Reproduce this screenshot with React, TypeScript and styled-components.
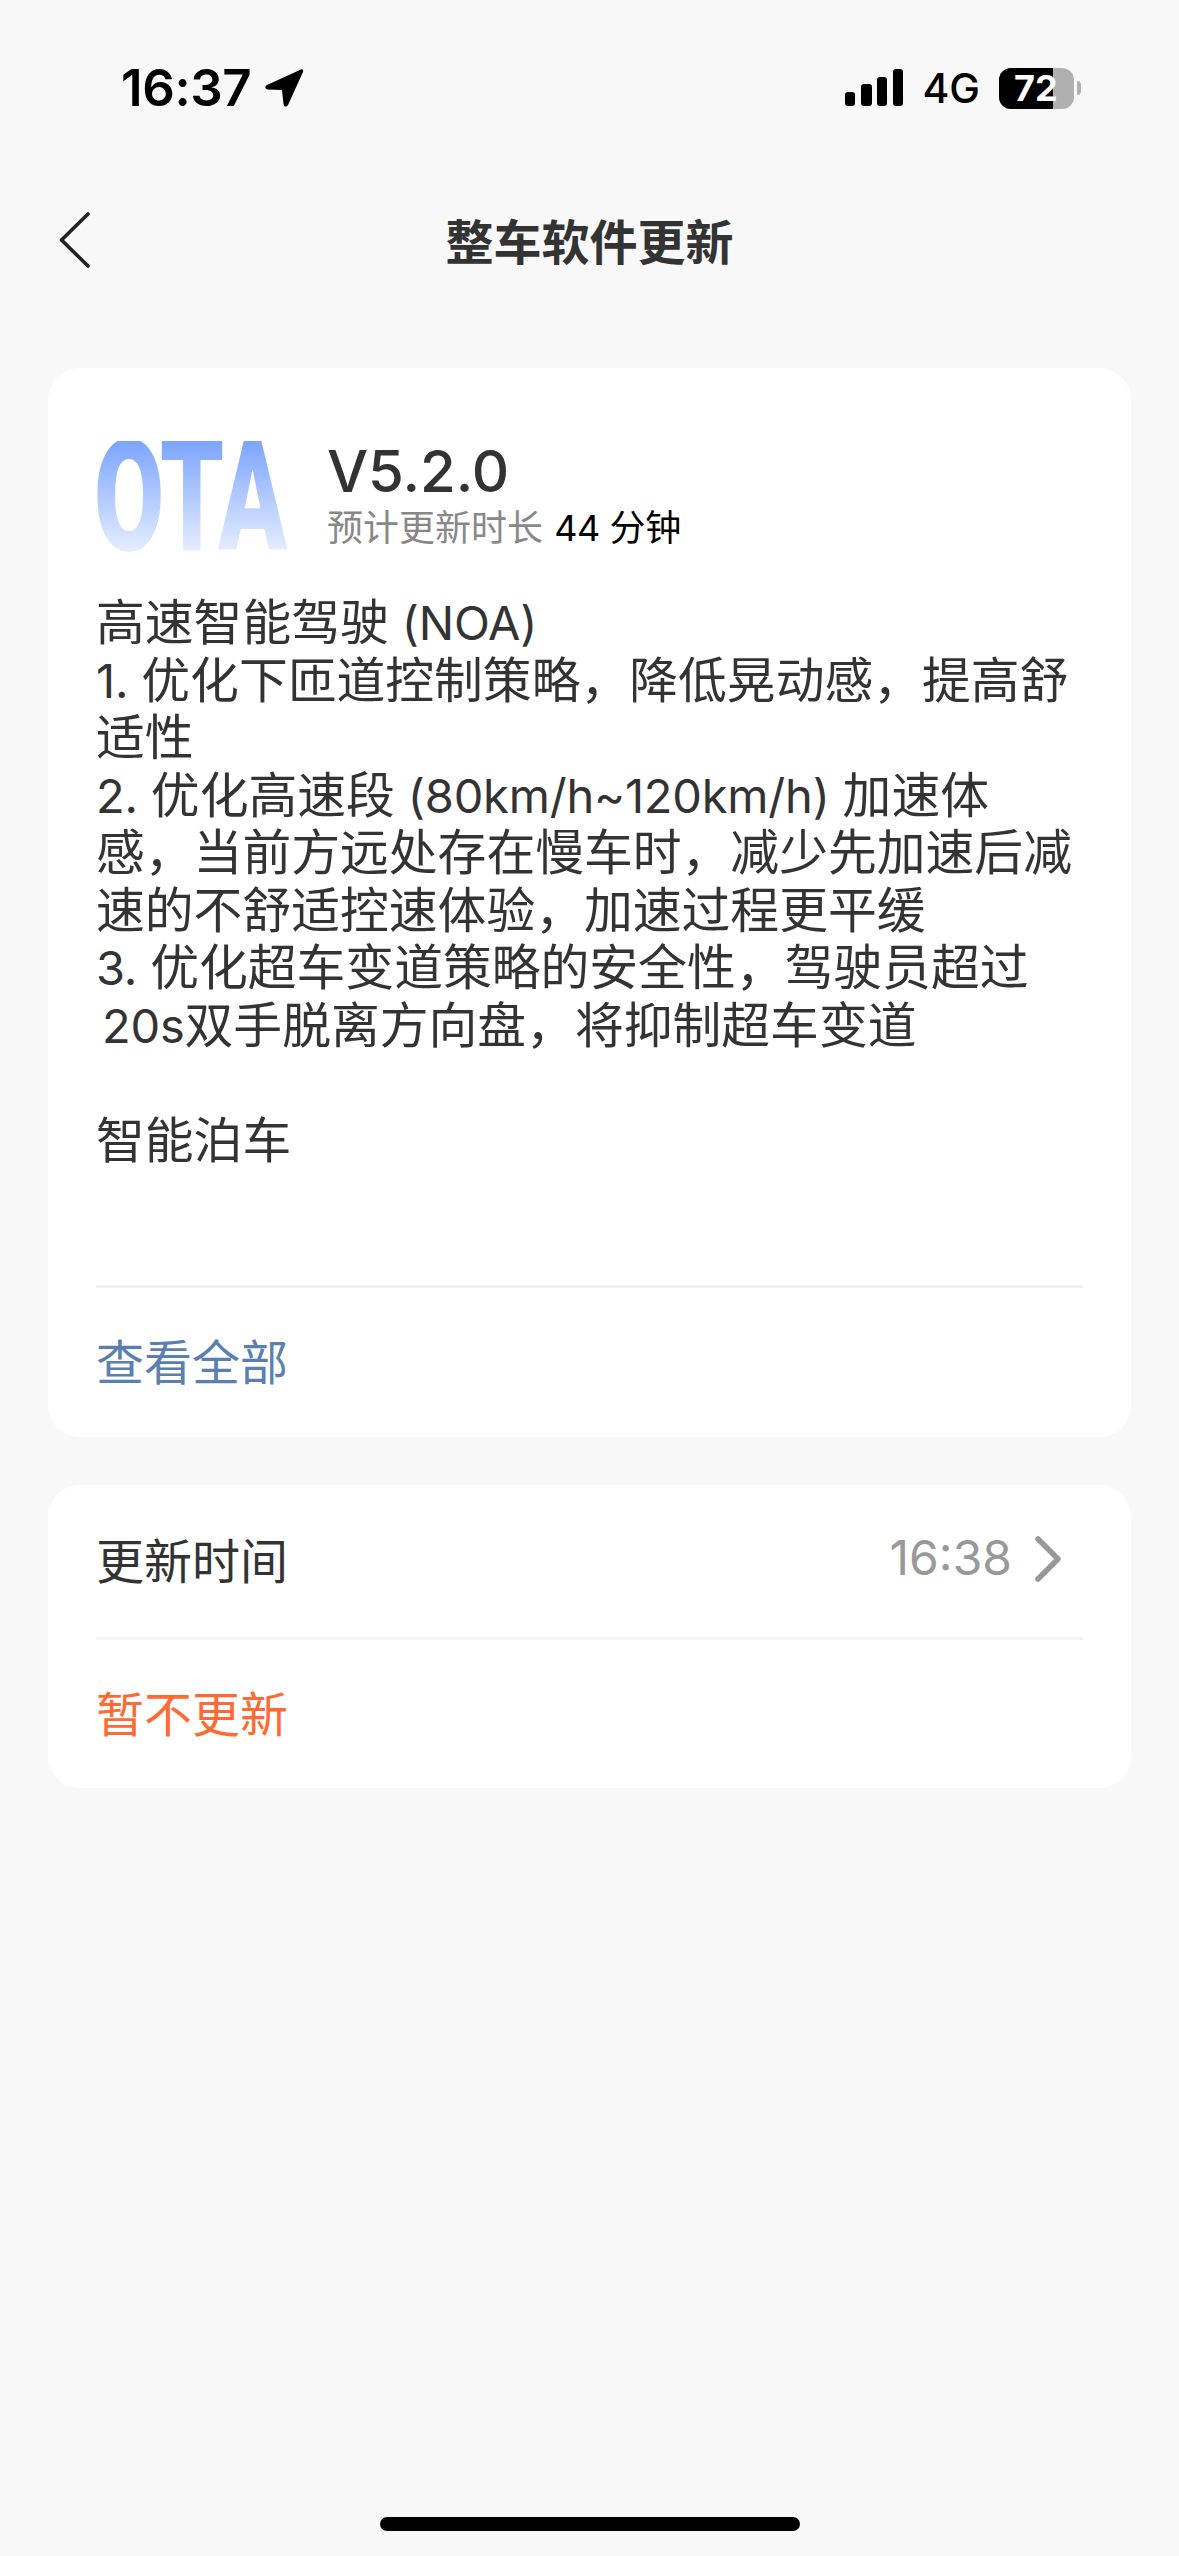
import React from "react";
import styled, { createGlobalStyle } from "styled-components";

const Global = createGlobalStyle`
  html, body { margin: 0; padding: 0; background: #f8f8f8; }
  body { font-family: Inter, "Noto Sans CJK SC", sans-serif; }
`;
const Page = styled.div`
  width: 1179px; height: 2556px; background: #f8f8f8; display: flex; flex-direction: column; overflow: hidden;
`;
const StatusBar = styled.div`
  height: 130px; padding: 66px 98px 0 121px; box-sizing: border-box; display: flex; justify-content: space-between; align-items: flex-start;
`;
const TimeGroup = styled.div`display: flex; align-items: center; gap: 13px; height: 44px;`;
const Time = styled.span`font: 600 51px/44px Inter, sans-serif; color: #000; letter-spacing: -0.4px;`;
const StatusRight = styled.div`display: flex; align-items: center; height: 44px;`;
const Network = styled.span`font: 500 41px/44px Inter, sans-serif; color: #000; margin: 0 19px 0 19px;`;
const Battery = styled.div`
  width: 75px; height: 41px; border-radius: 12px; position: relative; display: flex; background: #b0b0b0;
`;
const BatteryFill = styled.div`width: 54px; background: #000; border-radius: 12px 0 0 12px;`;
const BatteryText = styled.span`
  position: absolute; left: 15px; top: 0; font: 700 36px/41px Inter, sans-serif; color: #fff;
`;
const BatteryCap = styled.div`width: 4px; height: 14px; border-radius: 0 7px 7px 0; background: #b0b0b0; margin-left: 3px;`;
const NavBar = styled.div`height: 226px; position: relative; display: flex; align-items: center; justify-content: center;`;
const BackIcon = styled.svg`position: absolute; left: 58px; top: 82px;`;
const Title = styled.h1`margin: 0; font: 700 48px/58px Inter, "Noto Sans CJK SC", sans-serif; color: #333;`;
const Content = styled.main`padding: 12px 48px 0; display: flex; flex-direction: column; gap: 48px;`;
const Card = styled.section`background: #fff; border-radius: 32px; padding: 0 48px; display: flex; flex-direction: column;`;
const Header = styled.div`display: flex; align-items: flex-start; padding-top: 73px; height: 226px; box-sizing: border-box;`;
const LogoBox = styled.div`width: 192px; height: 111px; margin-right: 39px; flex: none;`;
const Logo = styled.span`
  display: inline-block; font: 900 155px/113px Roboto, sans-serif; height: 113px; margin-left: -2px; transform: scaleX(0.655); transform-origin: left top;
  background: linear-gradient(180deg, #7ba4ff 0%, #e8f0ff 100%); -webkit-background-clip: text; background-clip: text; color: transparent;
`;
const Meta = styled.div`display: flex; flex-direction: column; margin-top: -4px;`;
const Version = styled.div`font: 500 58px/68px Inter, sans-serif; color: #333;`;
const Duration = styled.div`font: 400 36px/46px Inter, "Noto Sans CJK SC", sans-serif; color: #888; white-space: pre;`;
const DurationValue = styled.span`color: #000; letter-spacing: -0.4px; margin-left: 1px;`;
const Notes = styled.div`height: 691px; font-size: 48.8px; line-height: 57.5px; color: #333;`;
const NoteLine = styled.div<{ $indent?: number }>`
  height: 57.5px; white-space: pre; padding-left: ${p => p.$indent ?? 0}px;
`;
const Latin = styled.span`font-size: 47px; letter-spacing: -0.2px;`;
const Divider = styled.div<{ $color?: string }>`height: 3px; background: ${p => p.$color ?? "#f0f0f0"};`;
const Row = styled.div<{ $height: number }>`
  height: ${p => p.$height}px; padding-bottom: 7px; box-sizing: border-box; display: flex; align-items: center; justify-content: space-between; font-size: 48px; color: #333;
`;
const Link = styled.span<{ $color: string }>`color: ${p => p.$color};`;
const Value = styled.div`display: flex; align-items: center; gap: 22px; color: #999; padding-right: 21px;`;
const ValueIcon = styled.svg`position: relative; top: 1px;`;
const HomeBar = styled.div`
  width: 420px; height: 14px; border-radius: 7px; background: #000; margin: auto auto 25px;
`;

const notes: { t: string; indent?: number }[] = [
  { t: "高速智能驾驶 (NOA)" },
  { t: "1. 优化下匝道控制策略，降低晃动感，提高舒" },
  { t: "适性" },
  { t: "2. 优化高速段 (80km/h~120km/h) 加速体" },
  { t: "感，当前方远处存在慢车时，减少先加速后减" },
  { t: "速的不舒适控速体验，加速过程更平缓" },
  { t: "3. 优化超车变道策略的安全性，驾驶员超过" },
  { t: "20s双手脱离方向盘，将抑制超车变道", indent: 6 },
  { t: " " },
  { t: "智能泊车" },
];

const withLatin = (t: string) =>
  t.split(/([\x20-\x7e]+)/).map((s, i) => (i % 2 ? <Latin key={i}>{s}</Latin> : s));

export default function App() {
  return (
    <Page>
      <Global />
      <StatusBar>
        <TimeGroup>
          <Time>16:37</Time>
          <svg width="40" height="40" viewBox="0 0 40 40">
            <path d="M37 1.5 L3 17 C0.5 18.5 1 21 4 21.5 L18 22 L19.5 36 C20 39 22.5 39.5 24 37 L39 4 C39.8 2 38.5 .8 37 1.5Z" fill="#000" />
          </svg>
        </TimeGroup>
        <StatusRight>
          <svg width="58" height="38" viewBox="0 0 58 38">
            <rect x="0" y="23" width="10" height="14" rx="3" fill="#000" />
            <rect x="16" y="15" width="11" height="22" rx="3" fill="#000" />
            <rect x="32" y="8" width="10" height="29" rx="3" fill="#000" />
            <rect x="48" y="0" width="10" height="37" rx="3" fill="#000" />
          </svg>
          <Network>4G</Network>
          <Battery>
            <BatteryFill />
            <BatteryText>72</BatteryText>
          </Battery>
          <BatteryCap />
        </StatusRight>
      </StatusBar>
      <NavBar>
        <BackIcon width="34" height="56" viewBox="0 0 34 56">
          <path d="M30 2 L3.5 28 L30 54" fill="none" stroke="#222" strokeWidth="3.6" strokeLinecap="round" strokeLinejoin="round" />
        </BackIcon>
        <Title>整车软件更新</Title>
      </NavBar>
      <Content>
        <Card>
          <Header>
            <LogoBox><Logo>OTA</Logo></LogoBox>
            <Meta>
              <Version>V5.2.0</Version>
              <Duration>预计更新时长 <DurationValue>44 分钟</DurationValue></Duration>
            </Meta>
          </Header>
          <Notes>
            {notes.map((n, i) => <NoteLine key={i} $indent={n.indent}>{withLatin(n.t)}</NoteLine>)}
          </Notes>
          <Divider />
          <Row $height={149}><Link $color="#5b7fb0">查看全部</Link></Row>
        </Card>
        <Card>
          <Row $height={152}>
            <span>更新时间</span>
            <Value>
              16:38
              <ValueIcon width="28" height="46" viewBox="0 0 28 46">
                <path d="M4 3 L24 23 L4 43" fill="none" stroke="#999" strokeWidth="5.5" strokeLinecap="round" strokeLinejoin="round" />
              </ValueIcon>
            </Value>
          </Row>
          <Divider $color="#f4f4f4" />
          <Row $height={148}><Link $color="#ff6a33">暂不更新</Link></Row>
        </Card>
      </Content>
      <HomeBar />
    </Page>
  );
}
